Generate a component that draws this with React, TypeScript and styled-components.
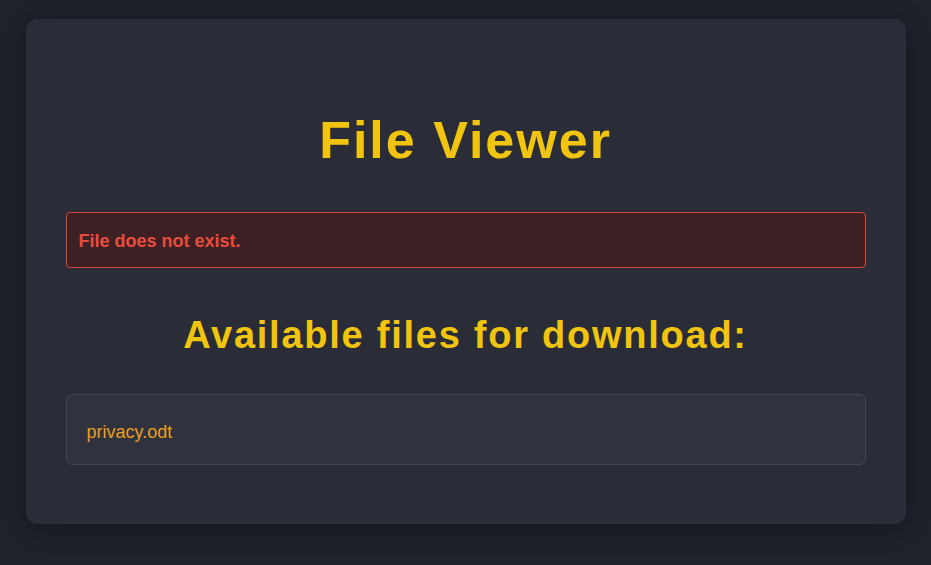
import { createGlobalStyle, styled } from 'styled-components'

const GlobalStyle = createGlobalStyle`
  html, body {
    margin: 0;
    padding: 0;
    background: #1e222b;
    font-family: 'Liberation Sans', Arial, sans-serif;
  }
`

const Page = styled.div`
  min-height: 565px;
  box-sizing: border-box;
  padding: 19px 0;
`

const Card = styled.div`
  max-width: 880px;
  margin: 0 auto;
  box-sizing: border-box;
  padding: 40px;
  background: #2a2d38;
  border-radius: 12px;
  box-shadow: 0 4px 24px rgba(0, 0, 0, 0.35);
`

const Title = styled.h1`
  margin: 51px 0 42px;
  text-align: center;
  color: #f1c40f;
  font-size: 52px;
  line-height: 60px;
  font-weight: 700;
  letter-spacing: 2px;
`

const ErrorBox = styled.div`
  padding: 15px 12px 13px;
  border: 1px solid #d9473a;
  border-radius: 4px;
  background: #3d2024;
  color: #e74c3c;
  font-size: 18px;
  line-height: 26px;
  font-weight: 700;
`

const SubTitle = styled.h2`
  margin: 45px 0 37px;
  text-align: center;
  color: #f1c40f;
  font-size: 38px;
  line-height: 44px;
  font-weight: 700;
  letter-spacing: 1.75px;
`

const FileList = styled.ul`
  list-style: none;
  margin: 0 0 19px;
  padding: 23px 20px 17px;
  border: 1px solid #42454f;
  border-radius: 6px;
  background: #30333d;
`

const FileItem = styled.li`
  line-height: 29px;
`

const FileLink = styled.a`
  color: #e99f22;
  font-size: 18px;
  text-decoration: none;
`

const files = ['privacy.odt']

export default function App() {
  return (
    <>
      <GlobalStyle />
      <Page>
        <Card>
          <Title>File Viewer</Title>
          <ErrorBox>File does not exist.</ErrorBox>
          <SubTitle>Available files for download:</SubTitle>
          <FileList>
            {files.map(name => (
              <FileItem key={name}>
                <FileLink href="#">{name}</FileLink>
              </FileItem>
            ))}
          </FileList>
        </Card>
      </Page>
    </>
  )
}
